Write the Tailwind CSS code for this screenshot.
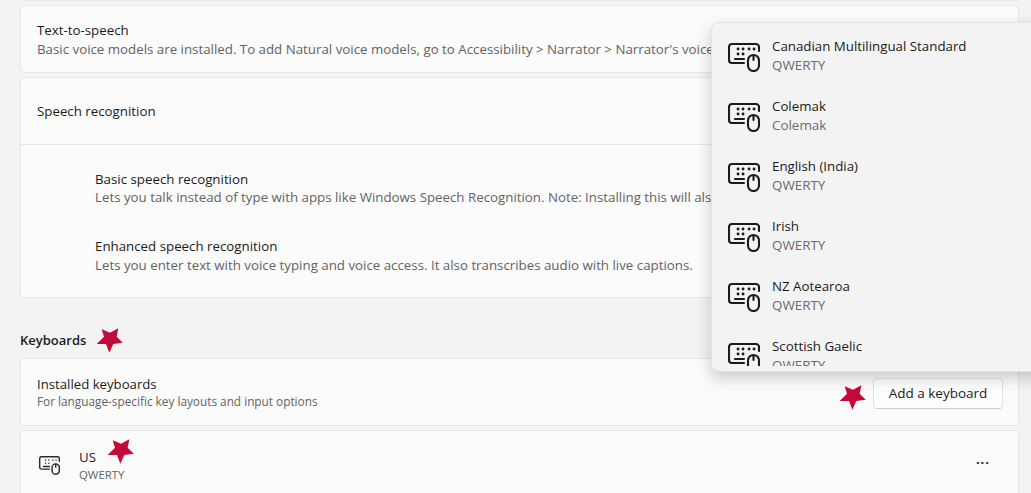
<!DOCTYPE html>
<html><head><meta charset="utf-8">
<script src="https://cdn.jsdelivr.net/npm/@tailwindcss/browser@4"></script>
</head>
<body class="m-0 p-0">
<div class="relative w-[1031px] h-[493px] overflow-hidden bg-[#f3f3f3] font-['Open_Sans','Noto_Sans',sans-serif] text-[#1b1b1b]">
  <div class="flex flex-col pl-5 pr-3">
    <div class="h-[1px] bg-[#e8e8e8]"></div>
    <div class="mt-1 h-[68px] bg-[#fbfbfb] border border-[#e6e6e6] rounded-[5px] pl-4 pt-[15px]">
      <p class="text-[13.3px] leading-[19px] whitespace-nowrap">Text-to-speech</p>
      <p class="text-[13.3px] leading-[18px] text-[#636363] whitespace-nowrap">Basic voice models are installed. To add Natural voice models, go to Accessibility &gt; Narrator &gt; Narrator's voice</p>
    </div>
    <div class="mt-1 h-[221px] bg-[#fbfbfb] border border-[#e6e6e6] rounded-[5px] flex flex-col">
      <div class="h-[67px] flex items-center pl-4 border-b border-[#e6e6e6] shrink-0">
        <p class="text-[13.3px] leading-[19px]">Speech recognition</p>
      </div>
      <div class="pl-[74px] pt-[25px] flex flex-col gap-[31px]">
        <div>
          <p class="text-[13.3px] leading-[18px] whitespace-nowrap">Basic speech recognition</p>
          <p class="text-[13.3px] leading-[18px] text-[#636363] whitespace-nowrap">Lets you talk instead of type with apps like Windows Speech Recognition. Note: Installing this will also</p>
        </div>
        <div>
          <p class="text-[13.3px] leading-[19px] whitespace-nowrap">Enhanced speech recognition</p>
          <p class="text-[13.3px] leading-[18px] text-[#636363] whitespace-nowrap">Lets you enter text with voice typing and voice access. It also transcribes audio with live captions.</p>
        </div>
      </div>
    </div>
    <h2 class="mt-[32px] h-[20px] text-[13px] leading-[20px] font-semibold">Keyboards</h2>
    <div class="mt-[8px] h-[68px] bg-[#fbfbfb] border border-[#e6e6e6] rounded-[5px] pl-4 pr-[15px] flex items-center justify-between">
      <div>
        <p class="text-[13.2px] leading-[18px]">Installed keyboards</p>
        <p class="text-[11.8px] leading-[17px] text-[#636363]">For language-specific key layouts and input options</p>
      </div>
      <button class="mt-[2px] w-[130px] h-[31px] bg-[#fefefe] border border-[#e3e3e3] border-b-[#cfcfcf] rounded-[4px] text-[13.5px] text-[#1b1b1b]">Add a keyboard</button>
    </div>
    <div class="mt-1 h-[80px] bg-[#fbfbfb] border border-[#e6e6e6] rounded-[5px] pl-[18px] pr-[28px] pt-[17px] flex items-start justify-between">
      <div class="flex items-center gap-[19px]">
        <svg class="w-[21px] h-[19px] mt-[-1px] text-[#2a2a2a]" viewBox="0 0 32 29" fill="none" stroke="currentColor" stroke-width="2.2" stroke-linecap="round" stroke-linejoin="round">
          <path d="M31 8V4a3 3 0 0 0-3-3H4a3 3 0 0 0-3 3v13a3 3 0 0 0 3 3h12"/>
          <path d="M7 16h9M25.500 12a5.500 5.500 0 0 1 5.500 5.500v5a5.500 5.500 0 0 1-11 0v-5a5.500 5.500 0 0 1 5.500-5.500zM25.500 12v5"/>
          <path d="M10 6h.1M15 6h.1M21 6h.1M26 6h.1M10 11h.1M15 11h.1"/>
        </svg>
        <div>
          <p class="text-[13.3px] leading-[18px]">US</p>
          <p class="text-[11.4px] leading-[17px] text-[#636363]">QWERTY</p>
        </div>
      </div>
      <span class="text-[13px] leading-[18px] font-bold tracking-[1px] mt-[2px]">...</span>
    </div>
  </div>

  <div class="absolute left-[711px] top-[22px] w-[340px] h-[350px] bg-[#f3f3f3] border border-[#e4e4e4] rounded-[8px] shadow-[0_6px_16px_rgba(0,0,0,0.2)]">
    <div class="mt-[10px] h-[333px] overflow-hidden flex flex-col pl-[16px]">
      <div class="h-[60px] shrink-0 flex items-start gap-[12px] pt-[4px]">
        <svg class="w-[32px] h-[29px] mt-[6px] text-[#1b1b1b]" viewBox="0 0 32 29" fill="none" stroke="currentColor" stroke-width="2.1" stroke-linecap="round" stroke-linejoin="round"><path d="M31 8V4a3 3 0 0 0-3-3H4a3 3 0 0 0-3 3v13a3 3 0 0 0 3 3h12"/><path d="M7 16h9M25.500 12a5.500 5.500 0 0 1 5.500 5.500v5a5.500 5.500 0 0 1-11 0v-5a5.500 5.500 0 0 1 5.500-5.500zM25.500 12v5"/><path stroke-width="2.8" d="M10 6h.1M15 6h.1M21 6h.1M26 6h.1M10 11h.1M15 11h.1"/></svg>
        <div><p class="text-[13.3px] leading-[19px] whitespace-nowrap">Canadian Multilingual Standard</p><p class="text-[13.4px] leading-[19px] text-[#6b6b6b]">QWERTY</p></div>
      </div>
      <div class="h-[60px] shrink-0 flex items-start gap-[12px] pt-[4px]">
        <svg class="w-[32px] h-[29px] mt-[6px] text-[#1b1b1b]" viewBox="0 0 32 29" fill="none" stroke="currentColor" stroke-width="2.1" stroke-linecap="round" stroke-linejoin="round"><path d="M31 8V4a3 3 0 0 0-3-3H4a3 3 0 0 0-3 3v13a3 3 0 0 0 3 3h12"/><path d="M7 16h9M25.500 12a5.500 5.500 0 0 1 5.500 5.500v5a5.500 5.500 0 0 1-11 0v-5a5.500 5.500 0 0 1 5.500-5.500zM25.500 12v5"/><path stroke-width="2.8" d="M10 6h.1M15 6h.1M21 6h.1M26 6h.1M10 11h.1M15 11h.1"/></svg>
        <div><p class="text-[13.3px] leading-[19px]">Colemak</p><p class="text-[13.4px] leading-[19px] text-[#6b6b6b]">Colemak</p></div>
      </div>
      <div class="h-[60px] shrink-0 flex items-start gap-[12px] pt-[4px]">
        <svg class="w-[32px] h-[29px] mt-[6px] text-[#1b1b1b]" viewBox="0 0 32 29" fill="none" stroke="currentColor" stroke-width="2.1" stroke-linecap="round" stroke-linejoin="round"><path d="M31 8V4a3 3 0 0 0-3-3H4a3 3 0 0 0-3 3v13a3 3 0 0 0 3 3h12"/><path d="M7 16h9M25.500 12a5.500 5.500 0 0 1 5.500 5.500v5a5.500 5.500 0 0 1-11 0v-5a5.500 5.500 0 0 1 5.500-5.500zM25.500 12v5"/><path stroke-width="2.8" d="M10 6h.1M15 6h.1M21 6h.1M26 6h.1M10 11h.1M15 11h.1"/></svg>
        <div><p class="text-[13.3px] leading-[19px]">English (India)</p><p class="text-[13.4px] leading-[19px] text-[#6b6b6b]">QWERTY</p></div>
      </div>
      <div class="h-[60px] shrink-0 flex items-start gap-[12px] pt-[4px]">
        <svg class="w-[32px] h-[29px] mt-[6px] text-[#1b1b1b]" viewBox="0 0 32 29" fill="none" stroke="currentColor" stroke-width="2.1" stroke-linecap="round" stroke-linejoin="round"><path d="M31 8V4a3 3 0 0 0-3-3H4a3 3 0 0 0-3 3v13a3 3 0 0 0 3 3h12"/><path d="M7 16h9M25.500 12a5.500 5.500 0 0 1 5.500 5.500v5a5.500 5.500 0 0 1-11 0v-5a5.500 5.500 0 0 1 5.500-5.500zM25.500 12v5"/><path stroke-width="2.8" d="M10 6h.1M15 6h.1M21 6h.1M26 6h.1M10 11h.1M15 11h.1"/></svg>
        <div><p class="text-[13.3px] leading-[19px]">Irish</p><p class="text-[13.4px] leading-[19px] text-[#6b6b6b]">QWERTY</p></div>
      </div>
      <div class="h-[60px] shrink-0 flex items-start gap-[12px] pt-[4px]">
        <svg class="w-[32px] h-[29px] mt-[6px] text-[#1b1b1b]" viewBox="0 0 32 29" fill="none" stroke="currentColor" stroke-width="2.1" stroke-linecap="round" stroke-linejoin="round"><path d="M31 8V4a3 3 0 0 0-3-3H4a3 3 0 0 0-3 3v13a3 3 0 0 0 3 3h12"/><path d="M7 16h9M25.500 12a5.500 5.500 0 0 1 5.500 5.500v5a5.500 5.500 0 0 1-11 0v-5a5.500 5.500 0 0 1 5.500-5.500zM25.500 12v5"/><path stroke-width="2.8" d="M10 6h.1M15 6h.1M21 6h.1M26 6h.1M10 11h.1M15 11h.1"/></svg>
        <div><p class="text-[13.3px] leading-[19px]">NZ Aotearoa</p><p class="text-[13.4px] leading-[19px] text-[#6b6b6b]">QWERTY</p></div>
      </div>
      <div class="h-[60px] shrink-0 flex items-start gap-[12px] pt-[4px]">
        <svg class="w-[32px] h-[29px] mt-[6px] text-[#1b1b1b]" viewBox="0 0 32 29" fill="none" stroke="currentColor" stroke-width="2.1" stroke-linecap="round" stroke-linejoin="round"><path d="M31 8V4a3 3 0 0 0-3-3H4a3 3 0 0 0-3 3v13a3 3 0 0 0 3 3h12"/><path d="M7 16h9M25.500 12a5.500 5.500 0 0 1 5.500 5.500v5a5.500 5.500 0 0 1-11 0v-5a5.500 5.500 0 0 1 5.500-5.500zM25.500 12v5"/><path stroke-width="2.8" d="M10 6h.1M15 6h.1M21 6h.1M26 6h.1M10 11h.1M15 11h.1"/></svg>
        <div><p class="text-[13.3px] leading-[19px]">Scottish Gaelic</p><p class="text-[13.4px] leading-[19px] text-[#6b6b6b]">QWERTY</p></div>
      </div>
    </div>
  </div>

  <svg class="absolute left-[96px] top-[327px] w-[27px] h-[27px] text-[#c2093a]" viewBox="0 0 27 27" fill="currentColor"><path d="M5.700 2.300L14 5.700 22.300 1.300 20.700 9.700 26.700 15.700 17.300 17 13.300 25.700 10 17 0.700 17 8 9.700z"/></svg>
  <svg class="absolute left-[839px] top-[384px] w-[27px] h-[27px] text-[#c2093a]" viewBox="0 0 27 27" fill="currentColor"><path d="M5.700 2.300L14 5.700 22.300 1.300 20.700 9.700 26.700 15.700 17.300 17 13.300 25.700 10 17 0.700 17 8 9.700z"/></svg>
  <svg class="absolute left-[107px] top-[438px] w-[27px] h-[27px] text-[#c2093a]" viewBox="0 0 27 27" fill="currentColor"><path d="M5.700 2.300L14 5.700 22.300 1.300 20.700 9.700 26.700 15.700 17.300 17 13.300 25.700 10 17 0.700 17 8 9.700z"/></svg>
</div>
</body></html>
